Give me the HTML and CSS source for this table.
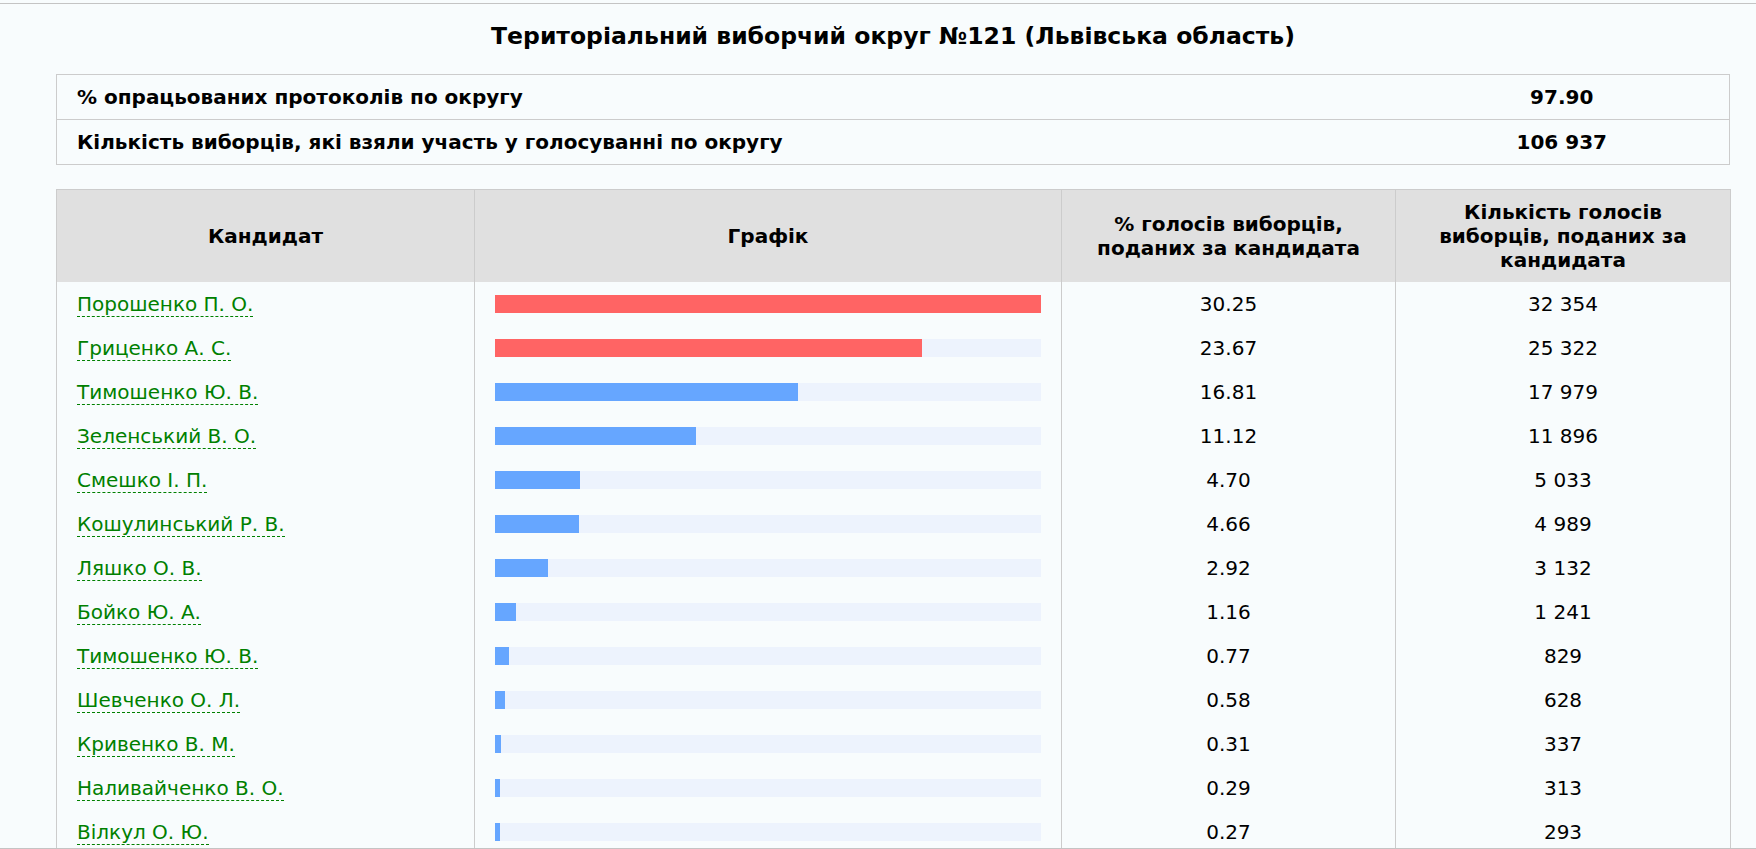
FILE: index.html
```html
<!DOCTYPE html>
<html lang="uk">
<head>
<meta charset="utf-8">
<title>Територіальний виборчий округ №121</title>
<link rel="stylesheet" href="styles.css">
</head>
<body>
<div class="frame">
  <h1 class="title">Територіальний виборчий округ №121 (Львівська область)</h1>
  <table class="info">
    <colgroup><col><col class="info-val-col"></colgroup>
    <tr><td class="info-label">% опрацьованих протоколів по округу</td><td class="info-val">97.90</td></tr>
    <tr><td class="info-label">Кількість виборців, які взяли участь у голосуванні по округу</td><td class="info-val">106 937</td></tr>
  </table>
  <table class="results">
    <colgroup><col class="c1"><col class="c2"><col class="c3"><col class="c4"></colgroup>
    <thead>
      <tr><th>Кандидат</th><th>Графік</th><th>% голосів виборців,<br>поданих за кандидата</th><th>Кількість голосів<br>виборців, поданих за<br>кандидата</th></tr>
    </thead>
    <tbody>
      <tr><td class="name"><a href="#">Порошенко П. О.</a></td><td class="chart"><div class="track"><div class="bar red" style="width:100%"></div></div></td><td class="num">30.25</td><td class="num">32 354</td></tr>
      <tr><td class="name"><a href="#">Гриценко А. С.</a></td><td class="chart"><div class="track"><div class="bar red" style="width:78.25%"></div></div></td><td class="num">23.67</td><td class="num">25 322</td></tr>
      <tr><td class="name"><a href="#">Тимошенко Ю. В.</a></td><td class="chart"><div class="track"><div class="bar" style="width:55.57%"></div></div></td><td class="num">16.81</td><td class="num">17 979</td></tr>
      <tr><td class="name"><a href="#">Зеленський В. О.</a></td><td class="chart"><div class="track"><div class="bar" style="width:36.76%"></div></div></td><td class="num">11.12</td><td class="num">11 896</td></tr>
      <tr><td class="name"><a href="#">Смешко І. П.</a></td><td class="chart"><div class="track"><div class="bar" style="width:15.54%"></div></div></td><td class="num">4.70</td><td class="num">5 033</td></tr>
      <tr><td class="name"><a href="#">Кошулинський Р. В.</a></td><td class="chart"><div class="track"><div class="bar" style="width:15.40%"></div></div></td><td class="num">4.66</td><td class="num">4 989</td></tr>
      <tr><td class="name"><a href="#">Ляшко О. В.</a></td><td class="chart"><div class="track"><div class="bar" style="width:9.65%"></div></div></td><td class="num">2.92</td><td class="num">3 132</td></tr>
      <tr><td class="name"><a href="#">Бойко Ю. А.</a></td><td class="chart"><div class="track"><div class="bar" style="width:3.83%"></div></div></td><td class="num">1.16</td><td class="num">1 241</td></tr>
      <tr><td class="name"><a href="#">Тимошенко Ю. В.</a></td><td class="chart"><div class="track"><div class="bar" style="width:2.55%"></div></div></td><td class="num">0.77</td><td class="num">829</td></tr>
      <tr><td class="name"><a href="#">Шевченко О. Л.</a></td><td class="chart"><div class="track"><div class="bar" style="width:1.92%"></div></div></td><td class="num">0.58</td><td class="num">628</td></tr>
      <tr><td class="name"><a href="#">Кривенко В. М.</a></td><td class="chart"><div class="track"><div class="bar" style="width:1.02%"></div></div></td><td class="num">0.31</td><td class="num">337</td></tr>
      <tr><td class="name"><a href="#">Наливайченко В. О.</a></td><td class="chart"><div class="track"><div class="bar" style="width:0.96%"></div></div></td><td class="num">0.29</td><td class="num">313</td></tr>
      <tr><td class="name"><a href="#">Вілкул О. Ю.</a></td><td class="chart"><div class="track"><div class="bar" style="width:0.89%"></div></div></td><td class="num">0.27</td><td class="num">293</td></tr>
    </tbody>
  </table>
</div>
</body>
</html>
```
FILE: styles.css
```css
html, body {
  margin: 0;
  padding: 0;
  background: #f8fcfd;
}
body {
  font-family: "DejaVu Sans", Verdana, sans-serif;
  font-size: 20px;
  color: #000;
}
.frame {
  margin-top: 3px;
  height: 846px;
  box-sizing: border-box;
  border-top: 1px solid #c4c4c4;
  border-bottom: 1px solid #c4c4c4;
  overflow: hidden;
  padding: 0 26px 0 56px;
}
.title {
  margin: 0;
  padding-top: 19px;
  font-size: 23.5px;
  line-height: 26px;
  font-weight: bold;
  text-align: center;
}
.info, .results {
  width: 100%;
  border-collapse: collapse;
  table-layout: fixed;
}
.info {
  margin-top: 25px;
  border: 1px solid #cccccc;
}
.info td {
  padding: 10px 20px;
  line-height: 24px;
  font-weight: bold;
  border-top: 1px solid #cccccc;
}
.info-val-col { width: 335px; }
.info-val { text-align: center; }
.results {
  margin-top: 24px;
  border: 1px solid #cccccc;
}
.c1 { width: 418px; }
.c2 { width: 587px; }
.c3 { width: 334px; }
.c4 { width: 335px; }
.results th {
  background: #e0e0e0;
  font-weight: bold;
  padding: 10px 20px;
  line-height: 24px;
  text-align: center;
  vertical-align: middle;
  border-left: 1px solid #cccccc;
}
.results td {
  padding: 10px 20px;
  line-height: 24px;
  border-left: 1px solid #cccccc;
  vertical-align: middle;
}
.results td.num { text-align: center; }
.name a {
  color: #008000;
  text-decoration: none;
  border-bottom: 1px dashed #008000;
}
.track {
  height: 18px;
  background: #edf3fd;
}
.bar {
  height: 18px;
  background: #66a6ff;
}
.bar.red { background: #ff6464; }
```
